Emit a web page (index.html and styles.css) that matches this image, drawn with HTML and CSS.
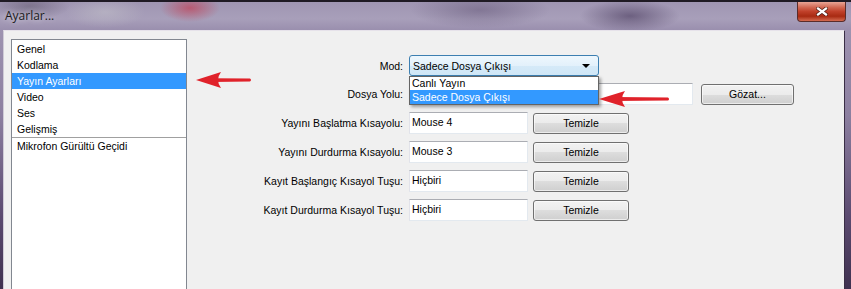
FILE: index.html
```html
<!DOCTYPE html>
<html lang="tr">
<head>
    <meta charset="UTF-8">
    <title>Ayarlar...</title>
    <link rel="stylesheet" href="styles.css">
</head>

<body>
    <div class="window">
        <div class="titlebar">
            <span class="title">Ayarlar...</span>
            <span class="close">
                <svg width="12" height="9" viewBox="0 0 12 9">
                    <path d="M2 1.5 L10 7.5 M10 1.5 L2 7.5" stroke="#4a1a12" stroke-width="3.6" stroke-linecap="square"/>
                    <path d="M2 1.5 L10 7.5 M10 1.5 L2 7.5" stroke="#fff" stroke-width="2.2" stroke-linecap="square"/>
                </svg>
            </span>
        </div>
        <div class="client">
            <ul class="sections">
                <li>Genel</li>
                <li>Kodlama</li>
                <li class="active">Yayın Ayarları</li>
                <li>Video</li>
                <li>Ses</li>
                <li class="last">Gelişmiş</li>
                <li>Mikrofon Gürültü Geçidi</li>
            </ul>
            <div class="settings">
                <div class="form">
                    <label>Mod:</label>
                    <div class="combo-wrap">
                        <div class="combo">
                            <span>Sadece Dosya Çıkışı</span>
                            <span class="caret"></span>
                        </div>
                        <ul class="dropdown">
                            <li>Canlı Yayın</li>
                            <li class="active">Sadece Dosya Çıkışı</li>
                        </ul>
                    </div>

                    <label>Dosya Yolu:</label>
                    <div class="row">
                        <div class="input path"></div>
                        <span class="btn browse">Gözat...</span>
                    </div>

                    <label>Yayını Başlatma Kısayolu:</label>
                    <div class="row">
                        <div class="input">Mouse 4</div>
                        <span class="btn">Temizle</span>
                    </div>

                    <label>Yayını Durdurma Kısayolu:</label>
                    <div class="row">
                        <div class="input">Mouse 3</div>
                        <span class="btn">Temizle</span>
                    </div>

                    <label>Kayıt Başlangıç Kısayol Tuşu:</label>
                    <div class="row">
                        <div class="input">Hiçbiri</div>
                        <span class="btn">Temizle</span>
                    </div>

                    <label>Kayıt Durdurma Kısayol Tuşu:</label>
                    <div class="row">
                        <div class="input">Hiçbiri</div>
                        <span class="btn">Temizle</span>
                    </div>
                </div>
            </div>
        </div>

        <!-- kırmızı oklar -->
        <svg class="arrow arrow-list" width="60" height="20" viewBox="0 0 60 20">
            <path d="M18 8.2 L56 8.6 Q58 10 56 11.6 L18 12 Z" fill="#e0222a"/>
            <path d="M2 10 L27 2 Q21 10 27 18 Z" fill="#e0222a"/>
        </svg>
        <svg class="arrow arrow-combo" width="76" height="22" viewBox="0 0 76 22">
            <path d="M18 9 L71 9.4 Q73 11 71 12.6 L18 13 Z" fill="#e0222a"/>
            <path d="M2 11 L28 3 Q22 11 28 19 Z" fill="#e0222a"/>
        </svg>
    </div>
</body>

</html>
```

FILE: styles.css
```css
body {
    margin: 0;
    width: 851px;
    height: 289px;
    overflow: hidden;
    font-family: "Liberation Sans", Arial, sans-serif;
    font-size: 10.5px;
    color: #000;
}

ul {
    margin: 0;
    padding: 0;
    list-style: none;
}

.window {
    position: relative;
    width: 851px;
    height: 289px;
    display: flex;
    flex-direction: column;
    padding: 0 6px 0 3px;
    box-sizing: border-box;
    overflow: hidden;
    background: linear-gradient(180deg, #a49ab6 0%, #8c7fa0 40%, #5b4a70 75%, #3f3150 100%);
}

.titlebar {
    flex-shrink: 0;
    height: 30px;
    margin: 0 -6px 0 -3px;
    padding: 0 6px 0 5px;
    display: flex;
    justify-content: space-between;
    align-items: flex-start;
    border-top: 2px solid #1f1a24;
    box-sizing: border-box;
    background:
        radial-gradient(ellipse 30px 14px at 190px 6px, rgba(200, 40, 60, .55), transparent),
        radial-gradient(ellipse 40px 16px at 105px 10px, rgba(200, 200, 205, .45), transparent),
        radial-gradient(ellipse 40px 14px at 30px 4px, rgba(60, 50, 70, .35), transparent),
        radial-gradient(ellipse 50px 16px at 630px 14px, rgba(70, 55, 90, .6), transparent),
        radial-gradient(ellipse 70px 18px at 480px 8px, rgba(80, 65, 100, .4), transparent),
        linear-gradient(180deg, #9f95b2, #a89fba 60%, #9a8fae);
}

.title {
    margin-top: 5px;
    font-family: "Open Sans", "Liberation Sans", sans-serif;
    font-size: 12px;
    color: #1a1a1a;
    text-shadow: 0 0 6px rgba(255, 255, 255, .7);
}

.close {
    width: 47px;
    height: 19px;
    margin-right: -1px;
    display: flex;
    align-items: center;
    justify-content: center;
    border: 1px solid #5a2c2a;
    border-top: none;
    border-radius: 0 0 4px 4px;
    background: linear-gradient(180deg, #e9a596 0%, #d0644e 30%, #c0402a 50%, #a82a12 75%, #d46a50 100%);
}

.client {
    flex: 1;
    min-height: 0;
    display: flex;
    align-items: flex-start;
    padding: 8px 0 0 7px;
    background: #f0f0f0;
    border-top: 1px solid #e6e2ea;
    border-left: 1px solid #cfcbd6;
    border-right: 1px solid #3a2e46;
}

.sections {
    width: 176px;
    height: 260px;
    box-sizing: border-box;
    padding-top: 1px;
    background: #fff;
    border: 1px solid #828790;
    flex-shrink: 0;
}

.sections li {
    height: 16px;
    line-height: 16px;
    padding-left: 5px;
    color: #000;
}

.sections li.active {
    background: #3399ff;
    color: #fff;
}

.sections li.last {
    border-bottom: 1px solid #a0a0a0;
}

.settings {
    margin-left: 6px;
    padding-top: 16px;
}

.form {
    display: grid;
    grid-template-columns: 210px auto;
    grid-template-rows: 21px;
    grid-auto-rows: 22px;
    column-gap: 6px;
    row-gap: 7px;
    align-items: center;
}

.form label {
    text-align: right;
    color: #000;
}

.row {
    display: flex;
    align-items: center;
    gap: 5px;
    height: 22px;
}

.input {
    width: 119px;
    height: 22px;
    box-sizing: border-box;
    padding: 3px 2px 0;
    line-height: 13px;
    background: #fff;
    border: 1px solid #e3e9ef;
    border-top-color: #abadb3;
    border-left-color: #e2e3ea;
}

.input.path {
    width: 284px;
}

.btn {
    width: 96px;
    height: 21px;
    box-sizing: border-box;
    display: flex;
    align-items: center;
    justify-content: center;
    border: 1px solid #707070;
    border-radius: 3px;
    background: linear-gradient(180deg, #f2f2f2 0%, #ebebeb 50%, #dddddd 50%, #cfcfcf 100%);
    box-shadow: inset 0 0 0 1px rgba(255, 255, 255, .6);
}

.btn.browse {
    width: 93px;
    margin-left: 3px;
}

.combo-wrap {
    position: relative;
    width: 190px;
    height: 21px;
}

.combo {
    height: 21px;
    box-sizing: border-box;
    padding: 0 8px 0 3px;
    display: flex;
    align-items: center;
    justify-content: space-between;
    border: 1px solid #3c7fb1;
    border-radius: 3px;
    background: linear-gradient(180deg, #eef7fd 0%, #e3f1fb 50%, #d5eaf8 51%, #cfe6f6 100%);
}

.caret {
    width: 0;
    height: 0;
    border-left: 4px solid transparent;
    border-right: 4px solid transparent;
    border-top: 4px solid #000;
}

.dropdown {
    position: absolute;
    top: 21px;
    left: 0;
    width: 190px;
    box-sizing: border-box;
    background: #fff;
    border: 1px solid #646464;
    box-shadow: 2px 2px 3px rgba(0, 0, 0, .35);
    z-index: 2;
}

.dropdown li {
    height: 13px;
    line-height: 13px;
    padding: 0 2px;
}

.dropdown li.active {
    height: 14px;
    line-height: 14px;
    background: #3399ff;
    color: #fff;
}

.arrow {
    position: absolute;
    z-index: 3;
}

.arrow-list {
    left: 194px;
    top: 70px;
}

.arrow-combo {
    left: 597px;
    top: 88px;
}
```
